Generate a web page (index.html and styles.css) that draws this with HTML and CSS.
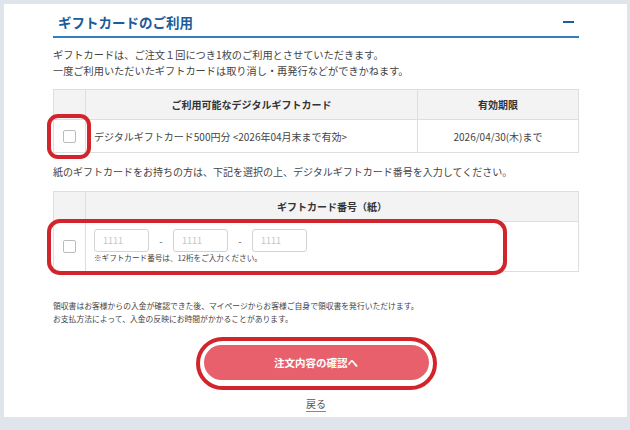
FILE: index.html
```html
<!DOCTYPE html>
<html lang="ja">
<head>
<meta charset="utf-8">
<title>ギフトカードのご利用</title>
<link rel="stylesheet" href="styles.css">
</head>
<body>
<div class="panel">
  <div class="head">
    <h2 class="title">ギフトカードのご利用</h2>
    <span class="minus"></span>
  </div>
  <p class="lead">ギフトカードは、ご注文１回につき1枚のご利用とさせていただきます。<br>一度ご利用いただいたギフトカードは取り消し・再発行などができかねます。</p>

  <table class="tbl tbl1">
    <tr>
      <th class="c-check"></th>
      <th class="c-name">ご利用可能なデジタルギフトカード</th>
      <th class="c-date">有効期限</th>
    </tr>
    <tr class="row1">
      <td class="c-check"><span class="box"></span></td>
      <td class="c-name left">デジタルギフトカード500円分 &lt;2026年04月末まで有効&gt;</td>
      <td class="c-date">2026/04/30(木)まで</td>
    </tr>
  </table>

  <p class="lead2">紙のギフトカードをお持ちの方は、下記を選択の上、デジタルギフトカード番号を入力してください。</p>

  <table class="tbl tbl2">
    <tr>
      <th class="c-check"></th>
      <th>ギフトカード番号（紙）</th>
    </tr>
    <tr class="row2">
      <td class="c-check"><span class="box"></span></td>
      <td class="left inputs-cell">
        <div class="inputs">
          <span class="inp">1111</span><span class="dash">-</span><span class="inp">1111</span><span class="dash">-</span><span class="inp">1111</span>
        </div>
        <div class="note">※ギフトカード番号は、12桁をご入力ください。</div>
      </td>
    </tr>
  </table>

  <p class="foot">領収書はお客様からの入金が確認できた後、マイページからお客様ご自身で領収書を発行いただけます。<br>お支払方法によって、入金の反映にお時間がかかることがあります。</p>

  <div class="actions">
    <button class="btn">注文内容の確認へ</button>
    <a class="back" href="#">戻る</a>
  </div>

  <span class="hl hl1"></span>
  <span class="hl hl2"></span>
  <span class="hl hl3"></span>
</div>
</body>
</html>
```

FILE: styles.css
```css
html, body {
  margin: 0;
  padding: 0;
}
body {
  background: #dfe5ea;
  width: 630px;
  height: 430px;
  overflow: hidden;
  font-family: "Noto Sans CJK JP", "Noto Sans", sans-serif;
  color: #444;
}
.panel {
  position: relative;
  margin: 4px 3px 0 4px;
  height: 413px;
  background: #fff;
  box-sizing: border-box;
  padding: 0 48px 0 49px;
}
.head {
  display: flex;
  align-items: center;
  justify-content: space-between;
  height: 34px;
  padding-top: 4px;
  box-sizing: border-box;
  border-bottom: 2px solid #2f7fc1;
}
.title {
  margin: 0 0 0 5px;
  font-size: 13.5px;
  font-weight: bold;
  color: #1d5c99;
  line-height: 20px;
}
.minus {
  width: 11px;
  height: 2px;
  background: #1d5c99;
  margin-right: 5px;
}
.lead {
  margin: 9px 0 10px;
  font-size: 10.2px;
  line-height: 16px;
}
.tbl {
  width: 526px;
  border-collapse: collapse;
  font-size: 10px;
  color: #444;
}
.tbl th, .tbl td {
  border: 1px solid #dedede;
  padding: 0;
  text-align: center;
}
.tbl th {
  background: #f3f3f3;
  height: 29px;
  font-weight: bold;
  color: #333;
}
.c-check {
  width: 31px;
}
.c-date {
  width: 160px;
}
.row1 td {
  height: 32px;
}
.left {
  text-align: left !important;
  padding-left: 8px !important;
}
.box {
  display: block;
  width: 11px;
  height: 11px;
  margin: 0 auto;
  border: 1px solid #bcbcbc;
  border-radius: 2px;
  background: #fff;
}
.lead2 {
  margin: 11px 0 11px;
  font-size: 10px;
  line-height: 16px;
}
.row2 td {
  height: 49px;
}
.row2 td.inputs-cell {
  height: 42px;
  vertical-align: top;
  padding-top: 7px !important;
}
.inputs {
  display: flex;
  align-items: center;
}
.inp {
  height: 21px;
  border: 1px solid #d3d3d3;
  border-radius: 3px;
  color: #c4c4c4;
  font-size: 9px;
  line-height: 21px;
  padding-left: 8px;
  box-sizing: content-box;
  width: 45px;
}
.dash {
  width: 24px;
  text-align: center;
  font-size: 10px;
  color: #666;
}
.note {
  font-size: 7.6px;
  line-height: 12px;
  margin-top: 0;
  color: #444;
}
.foot {
  margin: 27px 0 0;
  font-size: 7.8px;
  line-height: 13px;
  color: #444;
}
.actions {
  display: flex;
  flex-direction: column;
  align-items: center;
  margin-top: 20px;
}
.btn {
  width: 225px;
  height: 35px;
  border: none;
  border-radius: 18px;
  background: #e8606c;
  color: #fff;
  font-family: inherit;
  font-size: 10.5px;
  font-weight: bold;
  padding: 0;
}
.back {
  margin-top: 17px;
  font-size: 10px;
  line-height: 14px;
  color: #555;
  text-decoration: underline;
  text-underline-offset: 3px;
  text-decoration-color: #888;
}
.hl {
  position: absolute;
  border: 4.5px solid #d1252b;
  box-sizing: border-box;
  pointer-events: none;
}
.hl1 {
  left: 43px;
  top: 110px;
  width: 44px;
  height: 45px;
  border-radius: 11px;
}
.hl2 {
  left: 43px;
  top: 215px;
  width: 460px;
  height: 56px;
  border-radius: 13px;
}
.hl3 {
  left: 192px;
  top: 333px;
  width: 241px;
  height: 53px;
  border-radius: 27px;
}
```
